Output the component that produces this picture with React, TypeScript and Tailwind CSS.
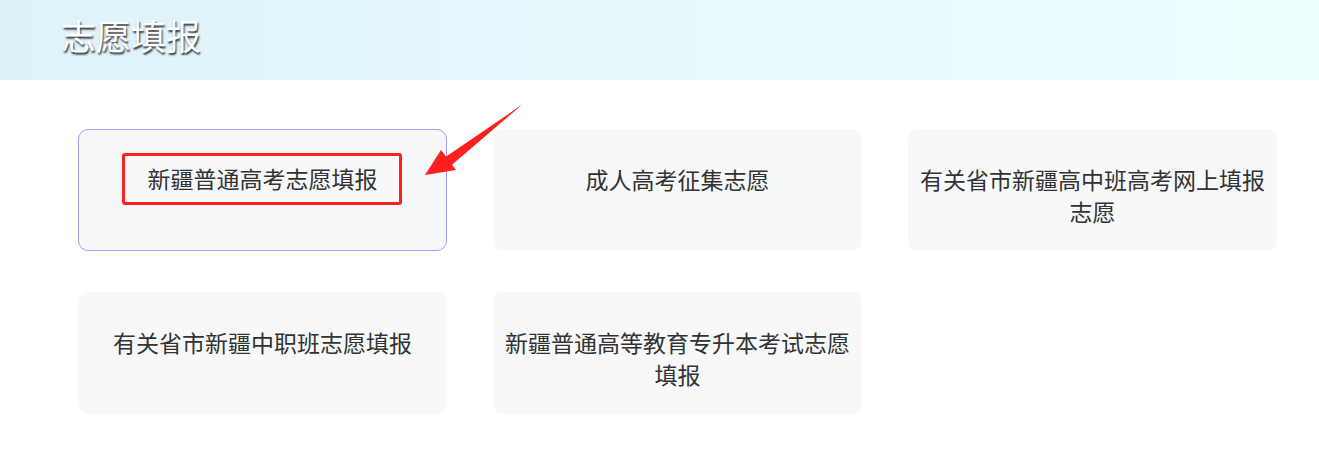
const cards = [
  "新疆普通高考志愿填报",
  "成人高考征集志愿",
  "有关省市新疆高中班高考网上填报志愿",
  "有关省市新疆中职班志愿填报",
  "新疆普通高等教育专升本考试志愿填报",
];

export default function App() {
  return (
    <div
      className="relative h-[458px] w-[1319px] overflow-hidden bg-white"
      style={{ fontFamily: '"Noto Sans CJK SC", "Noto Sans", sans-serif' }}
    >
      <header className="flex h-[80px] items-center bg-gradient-to-r from-[#ddf3fa] to-[#effeff] pl-[61px]">
        <h1 className="-mt-[11px] text-[35px] leading-none text-white [text-shadow:1px_2px_2px_rgba(0,0,0,0.8)]">
          志愿填报
        </h1>
      </header>

      <div className="mt-[49px] grid grid-cols-[369px_369px_369px] gap-x-[46px] gap-y-[41px] pl-[78px]">
        {cards.map((title, i) => (
          <div
            key={title}
            className={`relative h-[122px] rounded-[10px] bg-[#f7f8fa] px-[10px] pt-[34px] text-center text-[23px] leading-[32px] text-[#333] ${
              i === 0 ? "border border-[#a79ef5]" : ""
            }`}
          >
            <span className={i === 0 ? "relative -top-[2px]" : ""}>{title}</span>
            {i === 0 && (
              <div className="absolute left-[43px] top-[23px] h-[52px] w-[280px] rounded-[3px] border-[3px] border-[#ff1f1f]" />
            )}
          </div>
        ))}
      </div>

      <svg
        className="absolute left-[415px] top-[98px]"
        width="115"
        height="85"
        viewBox="0 0 115 85"
      >
        <path d="M108 6 L26 62 L32 71 Z" fill="#ff1f1f" />
        <path d="M10 77 L26 52 L41 72 Z" fill="#ff1f1f" />
      </svg>
    </div>
  );
}
